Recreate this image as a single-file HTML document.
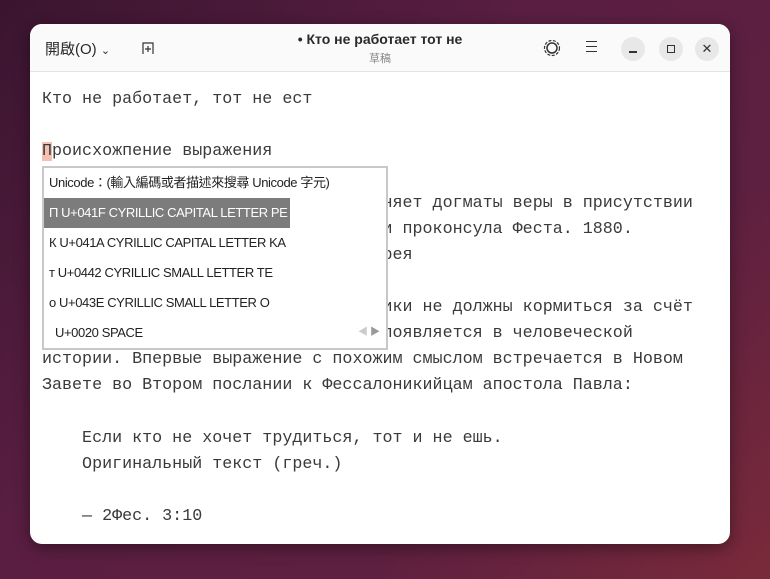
<!DOCTYPE html>
<html><head><meta charset="utf-8"><style>
*{margin:0;padding:0;box-sizing:border-box}
body{width:770px;height:579px;overflow:hidden;background:linear-gradient(135deg,#3a1530 0%,#5a1e42 40%,#5e2040 70%,#7a2a3a 100%);font-family:"Liberation Sans","Noto Sans CJK TC",sans-serif;position:relative}
.win{position:absolute;left:30px;top:24px;width:700px;height:520px;background:#fff;border-radius:12px;overflow:hidden;box-shadow:0 4px 16px rgba(0,0,0,.4)}
.hdr{height:48px;background:#fafafa;border-bottom:1px solid #e3e3e3;position:relative}
.ed{position:absolute;left:12px;font-family:"Liberation Mono",monospace;font-size:16.7px;color:#3a3a3a;line-height:26px;white-space:pre}
.pop{position:absolute;left:12px;top:142px;width:346px;height:184px;background:#fff;border:2px solid #c8c8c8;font-size:13px;color:#222}
.pop div{height:30px;line-height:30px;padding-left:5px;white-space:nowrap;letter-spacing:-.4px}
.sel{background:#7c7c7c;color:#fff;width:246px}
.btn{position:absolute;top:13px;width:24px;height:24px;border-radius:50%;background:#e8e8e8;font-size:13px;text-align:center;line-height:24px;color:#333}
</style></head><body>
<div class="win">
<div class="hdr">
<div style="position:absolute;left:15px;top:14px;font-size:15px;color:#2a2a2a">開啟(O) <span style="font-size:11px">&#8964;</span></div>
<svg style="position:absolute;left:112px;top:17px" width="14" height="14" viewBox="0 0 14 14"><path d="M1 13V2h10v11" fill="none" stroke="#333" stroke-width="1.2"/><path d="M6 5v6M3 8h6" stroke="#333" stroke-width="1.2"/></svg>
<div style="position:absolute;left:0;width:700px;top:7px;text-align:center;font-size:14px;font-weight:bold;color:#2a2a2a">• Кто не работает тот не</div>
<div style="position:absolute;left:0;width:700px;top:26px;text-align:center;font-size:11px;color:#888">草稿</div>
<svg style="position:absolute;left:513px;top:15px" width="18" height="18" viewBox="0 0 18 18"><circle cx="9" cy="9" r="5" fill="none" stroke="#333" stroke-width="1.5"/><circle cx="9" cy="9" r="7.5" fill="none" stroke="#333" stroke-width="1.2" stroke-dasharray="3 1.5"/></svg>
<div style="position:absolute;left:556px;top:17px;width:11px"><div style="height:1.3px;background:#333;margin-bottom:3.5px"></div><div style="height:1.3px;background:#333;margin-bottom:3.5px"></div><div style="height:1.3px;background:#333"></div></div>
<div class="btn" style="left:591px"><div style="position:absolute;left:8px;top:14px;width:8px;height:1.5px;background:#333"></div></div>
<div class="btn" style="left:629px"><div style="position:absolute;left:8px;top:8px;width:8px;height:8px;border:1.3px solid #333"></div></div>
<div class="btn" style="left:665px">✕</div>
</div>
<div class="ed" style="top:63px">Кто не работает, тот не ест

<span style="background:#f4c0b4">П</span>роисхожпение выражения

                                  няет догматы веры в присутствии
                                  и проконсула Феста. 1880.
                                  рея

                                  ики не должны кормиться за счёт
                                  появляется в человеческой
истории. Впервые выражение с похожим смыслом встречается в Новом
Завете во Втором послании к Фессалоникийцам апостола Павла:</div>
<div class="ed" style="top:402px">    Если кто не хочет трудиться, тот и не ешь.
    Оригинальный текст (греч.)</div>
<div class="ed" style="top:480px">    — 2Фес. 3:10</div>
<div class="pop">
<div>Unicode：(輸入編碼或者描述來搜尋 Unicode 字元)</div>
<div class="sel">П U+041F CYRILLIC CAPITAL LETTER PE</div>
<div>К U+041A CYRILLIC CAPITAL LETTER KA</div>
<div>т U+0442 CYRILLIC SMALL LETTER TE</div>
<div>о U+043E CYRILLIC SMALL LETTER O</div>
<div style="padding-left:11px;position:relative">U+0020 SPACE<span style="position:absolute;left:314px;color:#ccc;font-size:10px">◀ <span style="color:#999">▶</span></span></div>
</div>
</div>
</body></html>
